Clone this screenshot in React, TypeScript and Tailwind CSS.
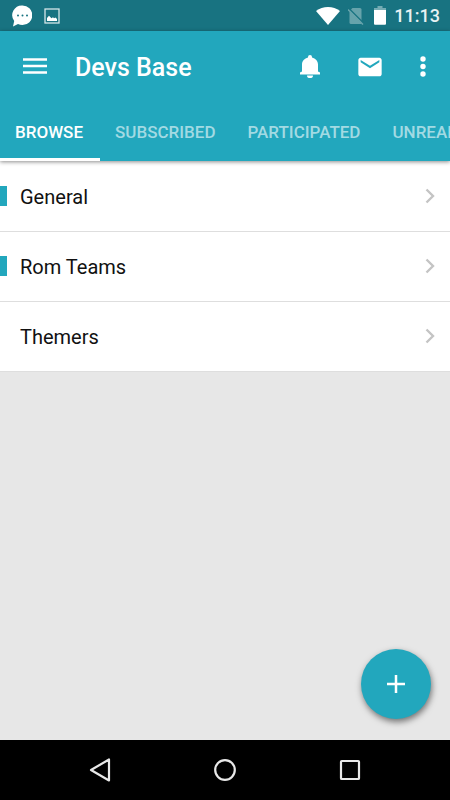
import { useState } from "react";

type Forum = {
  id: string;
  name: string;
  unread: boolean;
};

const tabs = ["Browse", "Subscribed", "Participated", "Unread"];

const forums: Forum[] = [
  { id: "general", name: "General", unread: true },
  { id: "rom-teams", name: "Rom Teams", unread: true },
  { id: "themers", name: "Themers", unread: false },
];

function StatusBar() {
  return (
    <div className="flex h-[31px] shrink-0 items-center bg-[#187381] pr-2.5 pl-3">
      <svg className="h-[22px] w-5" viewBox="0 0 20 22" aria-hidden="true">
        <path
          fill="#fff"
          d="M10.5 0.5a9.3 9.3 0 0 1 0 19.6c-1.700 0-3.200-.4-4.500-1.100L1 21.500l1.200-5.500A9.700 9.700 0 0 1 10.500.5z"
        />
        <g fill="#187381">
          <circle cx="6" cy="10.500" r="1" />
          <circle cx="10.500" cy="10.500" r="1" />
          <circle cx="15" cy="10.500" r="1" />
        </g>
      </svg>
      <svg className="ml-3 h-4 w-4" viewBox="0 0 16 16" aria-hidden="true">
        <rect x="1" y="1" width="14" height="14" fill="none" stroke="#d5e6e8" strokeWidth="1.300" />
        <path fill="#fff" d="M3 13V10l2-2.200 2.500 2.400L9 9.200l1 1 1.500-.8L13 11v2z" />
      </svg>

      <div className="ml-auto flex items-center">
        <svg className="h-[18px] w-6" viewBox="0 0 24 18" aria-hidden="true">
          <path fill="#fff" d="M0 4C3.500 1.300 7.500 0 12 0s8.500 1.300 12 4L12 18z" />
        </svg>
        <svg className="ml-2 h-[18px] w-4" viewBox="0 0 16 18" aria-hidden="true">
          <path fill="#66a3ab" d="M4.500 1H12a1.500 1.500 0 0 1 1.500 1.500V17H3a1.500 1.500 0 0 1-1.500-1.500V4z" />
          <path stroke="#187381" strokeWidth="1.500" d="M1 1.500 16 16.500" />
          <path stroke="#66a3ab" strokeWidth="1.500" d="M0 2.500 15 17.500" />
        </svg>
        <svg className="ml-2.5 h-[19px] w-3" viewBox="0 0 12 19" aria-hidden="true">
          <path fill="#74abb3" d="M3.500 0h5v2H12v2H0V2h3.500z" />
          <path fill="#fff" d="M0 4h12v13.700a1 1 0 0 1-1 1H1a1 1 0 0 1-1-1z" />
        </svg>
        <span className="ml-2 text-[18px] leading-6 font-medium text-[#e8f2f3]">11:13</span>
      </div>
    </div>
  );
}

function Toolbar() {
  return (
    <div className="flex h-[70px] items-center pt-0.5">
      <button type="button" aria-label="Menu" className="ml-5 p-[3px]">
        <svg className="block h-6 w-6" viewBox="0 0 24 24">
          <path stroke="#fff" strokeWidth="2.400" d="M0 4.500h24M0 11h24M0 17.500h24" />
        </svg>
      </button>
      <h1 className="ml-[25px] pt-0.5 text-[25px] leading-8 font-medium">Devs Base</h1>

      <div className="ml-auto flex items-center">
        <button type="button" aria-label="Notifications" className="px-4">
          <svg className="block h-7 w-7" viewBox="0 0 28 28">
            <path
              fill="#fff"
              d="M14 2a2 2 0 0 1 2 2v.5c3.500.8 6 3.500 6 7V18.500l2 1V21.500H4v-2L6 18.500v-7c0-3.500 2.500-6.200 6-7V4a2 2 0 0 1 2-2z"
            />
            <path fill="#fff" d="M11 22.500h6a3 2.600 0 0 1-6 0z" />
          </svg>
        </button>
        <button type="button" aria-label="Messages" className="px-4">
          <svg className="block h-7 w-7" viewBox="0 0 24 24">
            <path
              fill="#fff"
              d="M20 4H4c-1.100 0-1.990.9-1.990 2L2 18c0 1.100.9 2 2 2h16c1.100 0 2-.9 2-2V6c0-1.100-.9-2-2-2zm0 4-8 5-8-5V6l8 5 8-5v2z"
            />
          </svg>
        </button>
        <button type="button" aria-label="More options" className="pr-3 pl-2">
          <svg className="block h-[30px] w-[30px]" viewBox="0 0 30 30">
            <g fill="#fff">
              <circle cx="15" cy="7" r="2.700" />
              <circle cx="15" cy="14.500" r="2.700" />
              <circle cx="15" cy="22" r="2.700" />
            </g>
          </svg>
        </button>
      </div>
    </div>
  );
}

function TabBar({
  active,
  onSelect,
}: {
  active: string;
  onSelect: (tab: string) => void;
}) {
  return (
    <div role="tablist" className="flex h-[60px] overflow-hidden">
      {tabs.map((tab) => (
        <button
          key={tab}
          type="button"
          role="tab"
          aria-selected={tab === active}
          onClick={() => onSelect(tab)}
          className={`shrink-0 border-b-[3px] pt-[5px] pr-[17px] pl-[15px] text-[17px] leading-6 font-medium uppercase ${
            tab === active
              ? "border-white text-white"
              : "border-transparent text-[#a2dae3]"
          }`}
        >
          {tab}
        </button>
      ))}
    </div>
  );
}

function ForumRow({ forum }: { forum: Forum }) {
  return (
    <li className="border-b border-[#dedede] bg-white">
      <a href={`#${forum.id}`} className="flex h-[69px] items-center pb-px">
        <span className={`h-5 w-[7px] ${forum.unread ? "bg-[#22a7bd]" : ""}`} />
        <span className="ml-[13px] pt-0.5 text-[20px] leading-6 text-[#111]">{forum.name}</span>
        <svg className="mr-3.5 ml-auto h-4 w-3" viewBox="0 0 12 16" aria-hidden="true">
          <path fill="none" stroke="#c4c4c4" strokeWidth="2.400" d="m2.500 1.500 6.500 6.500-6.500 6.500" />
        </svg>
      </a>
    </li>
  );
}

function NavigationBar() {
  return (
    <nav className="flex h-[60px] shrink-0 items-center justify-center gap-[95px] bg-black">
      <button type="button" aria-label="Back">
        <svg className="block h-[30px] w-[30px]" viewBox="0 0 30 30">
          <path
            fill="none"
            stroke="#e8e8e8"
            strokeWidth="2.200"
            strokeLinejoin="round"
            d="M24 4.500v21L6 15z"
          />
        </svg>
      </button>
      <button type="button" aria-label="Home">
        <svg className="block h-[30px] w-[30px]" viewBox="0 0 30 30">
          <circle cx="15" cy="15" r="9.800" fill="none" stroke="#e8e8e8" strokeWidth="2.200" />
        </svg>
      </button>
      <button type="button" aria-label="Recent apps">
        <svg className="block h-[30px] w-[30px]" viewBox="0 0 30 30">
          <rect
            x="6"
            y="6"
            width="18"
            height="18"
            rx="0.800"
            fill="none"
            stroke="#e8e8e8"
            strokeWidth="2.200"
          />
        </svg>
      </button>
    </nav>
  );
}

export default function App() {
  const [activeTab, setActiveTab] = useState("Browse");

  return (
    <div className="flex min-h-screen flex-col bg-[#e7e7e7] font-[Roboto,sans-serif]">
      <StatusBar />
      <header className="z-10 shrink-0 bg-[#22a7bd] text-white shadow-[0_1px_4px_rgba(0,0,0,0.45)]">
        <Toolbar />
        <TabBar active={activeTab} onSelect={setActiveTab} />
      </header>

      <main className="relative flex-1">
        <ul className="bg-white pt-px">
          {forums.map((forum) => (
            <ForumRow key={forum.id} forum={forum} />
          ))}
        </ul>

        <button
          type="button"
          aria-label="New topic"
          className="absolute right-[19px] bottom-[21px] flex h-[70px] w-[70px] items-center justify-center rounded-full bg-[#22a7bd] shadow-[1px_3px_6px_rgba(0,0,0,0.5)]"
        >
          <svg className="h-[18px] w-[18px]" viewBox="0 0 18 18">
            <path stroke="#fff" strokeWidth="2.500" d="M9 0v18M0 9h18" />
          </svg>
        </button>
      </main>

      <NavigationBar />
    </div>
  );
}
